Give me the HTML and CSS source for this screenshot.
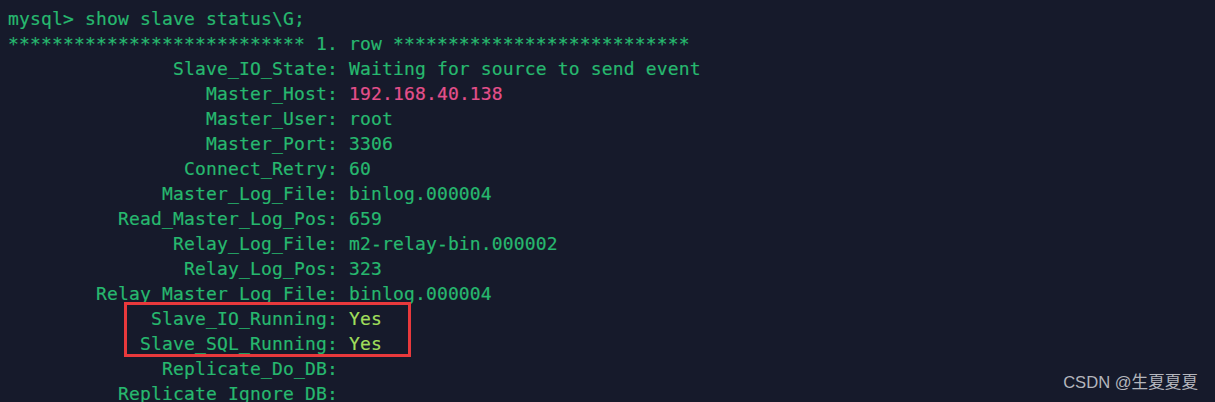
FILE: index.html
```html
<!DOCTYPE html>
<html>
<head>
<meta charset="utf-8">
<link rel="stylesheet" href="styles.css">
</head>
<body>
<div class="term">
<pre class="out">mysql&gt; show slave status\G;
*************************** 1. row ***************************
               Slave_IO_State: Waiting for source to send event
                  Master_Host: <span class="ip">192.168.40.138</span>
                  Master_User: root
                  Master_Port: 3306
                Connect_Retry: 60
              Master_Log_File: binlog.000004
          Read_Master_Log_Pos: 659
               Relay_Log_File: m2-relay-bin.000002
                Relay_Log_Pos: 323
        Relay_Master_Log_File: binlog.000004
             Slave_IO_Running: <span class="yes">Yes</span>
            Slave_SQL_Running: <span class="yes">Yes</span>
              Replicate_Do_DB:
          Replicate_Ignore_DB:</pre>
<div class="mark"></div>
<div class="wm">CSDN @生夏夏夏</div>
</div>
</body>
</html>
```
FILE: styles.css
```css
html, body {
  margin: 0;
  padding: 0;
  background: #161a2b;
}
.term {
  position: relative;
  width: 1215px;
  height: 402px;
  overflow: hidden;
  background: #161a2b;
}
.out {
  margin: 0;
  padding: 6px 0 0 8px;
  font-family: "DejaVu Sans Mono", monospace;
  font-size: 18px;
  letter-spacing: 0.16px;
  line-height: 25px;
  color: #27b86f;
  -webkit-text-stroke: 0.2px currentColor;
  white-space: pre;
}
.ip {
  color: #e4508b;
}
.yes {
  color: #a0df5c;
}
.mark {
  position: absolute;
  left: 124px;
  top: 302px;
  width: 281px;
  height: 49px;
  border: 3px solid #e8393c;
}
.wm {
  position: absolute;
  right: 17px;
  bottom: 9px;
  font-family: "Liberation Sans", "Noto Sans CJK SC", sans-serif;
  font-size: 16.6px;
  color: #b4b6bd;
}
```
